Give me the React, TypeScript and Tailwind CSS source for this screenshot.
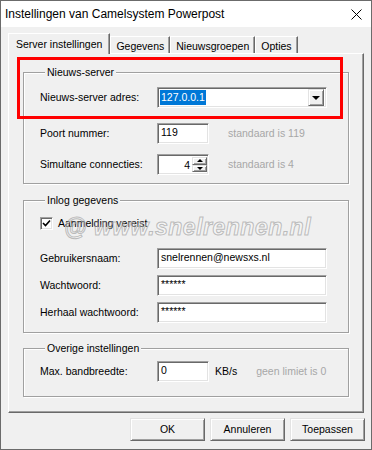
import React from 'react';

// classic win32 3D edges
const sunken = 'bg-white border border-t-[#a0a0a0] border-l-[#a0a0a0] border-r-white border-b-white shadow-[inset_1px_1px_0_#696969,inset_-1px_-1px_0_#e3e3e3]';
const raised = 'bg-[#f0f0f0] border border-t-[#e3e3e3] border-l-[#e3e3e3] border-r-[#696969] border-b-[#696969] shadow-[inset_1px_1px_0_#fff,inset_-1px_-1px_0_#a0a0a0]';

const tabs = ['Server instellingen', 'Gegevens', 'Nieuwsgroepen', 'Opties'];

const GroupBox = ({ title, className, children }: { title: string; className: string; children: React.ReactNode }) => (
    <fieldset className={`mx-[14px] border border-[#a0a0a0] shadow-[inset_1px_1px_0_#fff,1px_1px_0_#fff] pl-[16px] ${className}`}>
        <legend className="ml-[5px] px-[2px] leading-[14px] bg-[#f0f0f0]">{title}</legend>
        {children}
    </fieldset>
);

const Row = ({ label, className, children }: { label: string; className: string; children: React.ReactNode }) => (
    <div className={`flex items-center h-[21px] ${className}`}>
        <div className="w-[117px] shrink-0">{label}</div>
        {children}
    </div>
);

const TextBox = ({ value, width }: { value: string; width: string }) => (
    <div className={`${sunken} ${width} h-[21px] flex items-center pl-[3px] pb-[1px]`}>{value}</div>
);

const Hint = ({ children }: { children: React.ReactNode }) => (
    <span className="ml-[19px] text-[#a7a7a7]">{children}</span>
);

const Arrow = ({ up, size }: { up?: boolean; size: 'sm' | 'lg' }) => {
    if (size === 'lg') return <div className="w-0 h-0 border-l-[4px] border-r-[4px] border-t-[4px] border-l-transparent border-r-transparent border-t-black" />;
    return up
        ? <div className="w-0 h-0 border-l-[3px] border-r-[3px] border-b-[3px] border-l-transparent border-r-transparent border-b-black" />
        : <div className="w-0 h-0 border-l-[3px] border-r-[3px] border-t-[3px] border-l-transparent border-r-transparent border-t-black" />;
};

export default function App() {
    return (
        <div className="relative w-[372px] h-[450px] border border-[#6b6b6b] bg-[#f0f0f0] flex flex-col text-[10.5px] text-black font-['Liberation_Sans',Arial,sans-serif] overflow-hidden">
            {/* title bar */}
            <div className="h-[26px] bg-white flex items-center justify-between pl-[4px] pr-[9px]">
                <span className="text-[12px]">Instellingen van Camelsystem Powerpost</span>
                <svg width="11" height="11" viewBox="0 0 11 11" className="mt-[1px]">
                    <path d="M0.5 0.5 L10.5 10.5 M10.5 0.5 L0.5 10.5" stroke="#000" strokeWidth="1" />
                </svg>
            </div>

            {/* tabs */}
            <div className="mt-[6px] ml-[7px] h-[20px] flex items-end">
                {tabs.map((t, i) => (
                    <div
                        key={t}
                        className={i === 0
                            ? 'relative z-10 -mb-px h-[21px] px-[7px] pt-[3px] bg-[#f0f0f0] border-t border-l border-t-white border-l-white border-r border-r-[#696969] shadow-[inset_-1px_0_0_#a0a0a0]'
                            : 'h-[17px] px-[5px] pt-[2px] bg-[#f0f0f0] border-t border-t-white border-l border-l-white border-r border-r-[#696969] shadow-[inset_-1px_0_0_#a0a0a0]'}
                    >
                        {t}
                    </div>
                ))}
            </div>

            {/* tab page */}
            <div className="mx-[7px] flex flex-col border border-t-white border-l-white border-r-[#696969] border-b-[#696969] shadow-[inset_-1px_-1px_0_#a0a0a0] pt-[11px] pb-[15px]">
                <GroupBox title="Nieuws-server" className="pb-[8px]">
                    <Row label="Nieuws-server adres:" className="mt-[8px]">
                        <div className={`${sunken} w-[170px] h-[21px] flex items-center justify-between pl-[2px] pr-[2px]`}>
                            <span className="bg-[#0078d7] text-white leading-[15px] px-[1px]">127.0.0.1</span>
                            <div className={`${raised} w-[16px] h-[17px] flex items-center justify-center`}>
                                <Arrow size="lg" />
                            </div>
                        </div>
                    </Row>
                    <Row label="Poort nummer:" className="mt-[15px]">
                        <TextBox value="119" width="w-[52px]" />
                        <Hint>standaard is 119</Hint>
                    </Row>
                    <Row label="Simultane connecties:" className="mt-[10px]">
                        <div className={`${sunken} w-[52px] h-[21px] flex items-stretch p-[2px] pr-[1px]`}>
                            <div className="flex-1 text-right pr-[2px] leading-[16px]">4</div>
                            <div className="w-[15px] flex flex-col">
                                <div className={`${raised} h-[9px] flex items-center justify-center`}><Arrow up size="sm" /></div>
                                <div className={`${raised} h-[9px] flex items-center justify-center`}><Arrow size="sm" /></div>
                            </div>
                        </div>
                        <Hint>standaard is 4</Hint>
                    </Row>
                </GroupBox>

                <GroupBox title="Inlog gegevens" className="mt-[9px] pb-[9px]">
                    <div className="mt-[10px] h-[13px] flex items-center">
                        <div className={`${sunken} w-[13px] h-[13px] flex items-center justify-center`}>
                            <svg width="9" height="9" viewBox="0 0 9 9">
                                <path d="M1 4 L3.5 6.5 L8 1.5" fill="none" stroke="#000" strokeWidth="1.6" />
                            </svg>
                        </div>
                        <span className="ml-[5px]">Aanmelding vereist</span>
                    </div>
                    <Row label="Gebruikersnaam:" className="mt-[18px]">
                        <TextBox value="snelrennen@newsxs.nl" width="w-[170px]" />
                    </Row>
                    <Row label="Wachtwoord:" className="mt-[6px]">
                        <TextBox value="******" width="w-[170px]" />
                    </Row>
                    <Row label="Herhaal wachtwoord:" className="mt-[6px]">
                        <TextBox value="******" width="w-[170px]" />
                    </Row>
                </GroupBox>

                <GroupBox title="Overige instellingen" className="mt-[8px] pb-[14px]">
                    <Row label="Max. bandbreedte:" className="mt-[6px]">
                        <TextBox value="0" width="w-[52px]" />
                        <span className="ml-[6px]">KB/s</span>
                        <Hint>geen limiet is 0</Hint>
                    </Row>
                </GroupBox>
            </div>

            {/* dialog buttons */}
            <div className="mt-[5px] mr-[6px] flex justify-end gap-[5px]">
                {['OK', 'Annuleren', 'Toepassen'].map((b) => (
                    <div key={b} className={`${raised} w-[75px] h-[23px] flex items-center justify-center`}>{b}</div>
                ))}
            </div>

            {/* annotation + watermark overlays */}
            <div className="absolute left-[16px] top-[56px] w-[326px] h-[62px] border-[3px] border-[#ff0000] pointer-events-none" />
            <div className="absolute left-[63px] top-[209px] text-[23px] font-bold italic tracking-[0.5px] text-[rgba(255,255,255,0.3)] [-webkit-text-stroke:1px_rgba(150,150,150,0.6)] pointer-events-none">
                @ www.snelrennen.nl
            </div>
        </div>
    );
}
